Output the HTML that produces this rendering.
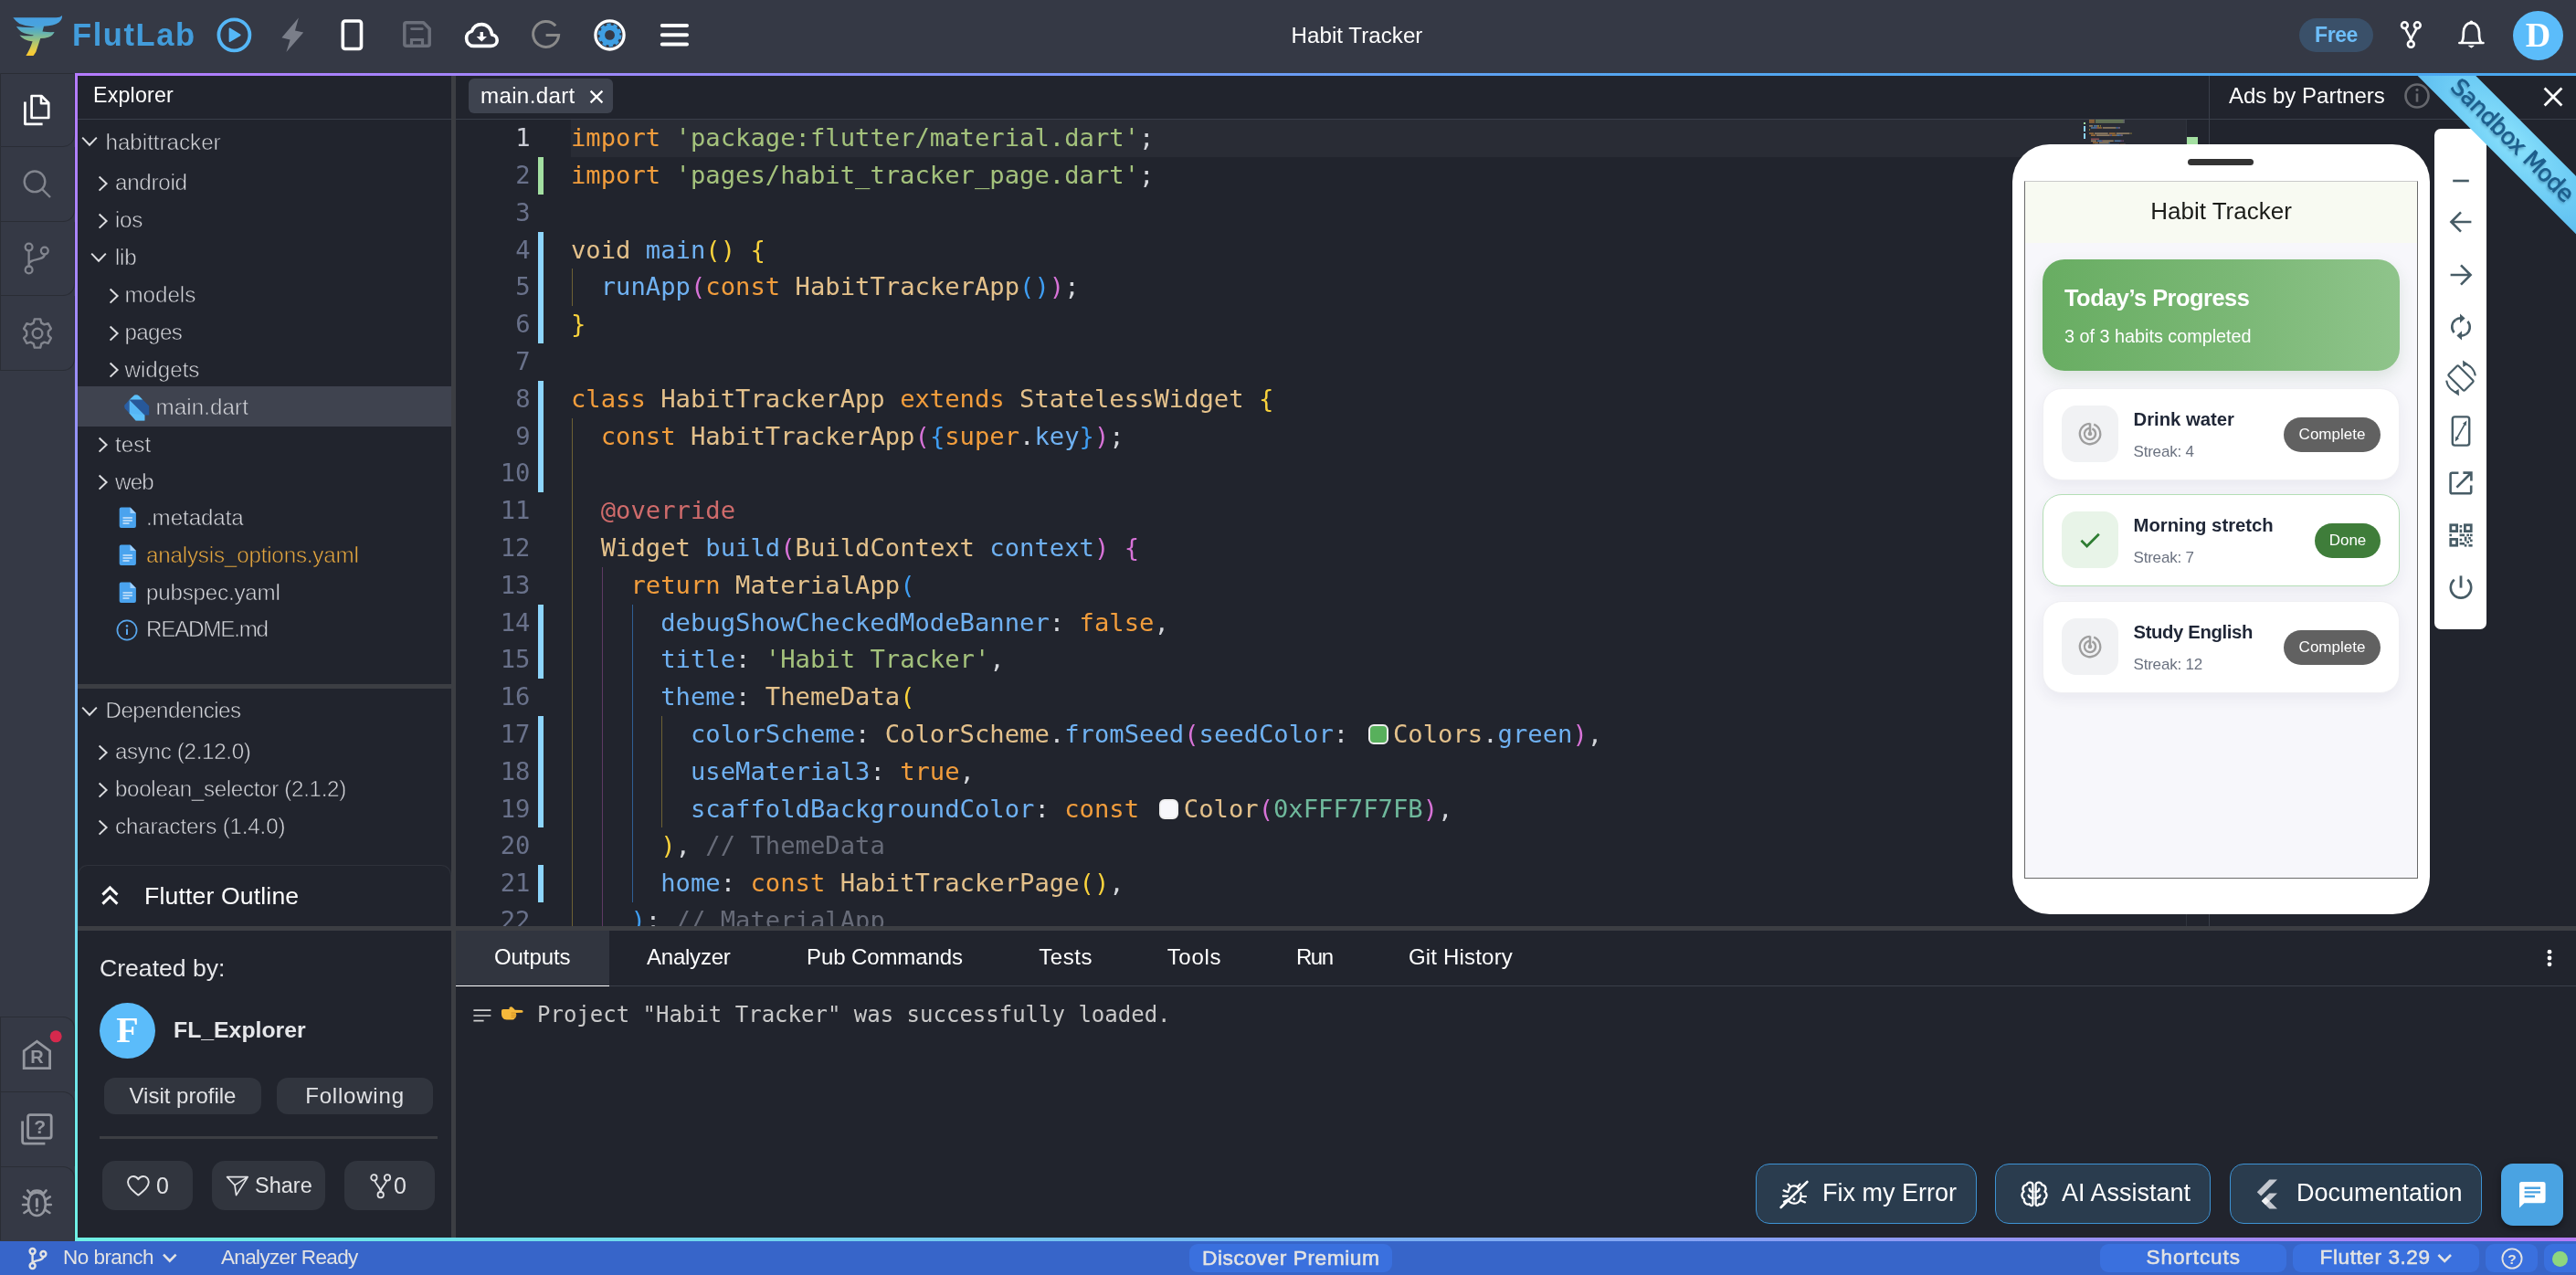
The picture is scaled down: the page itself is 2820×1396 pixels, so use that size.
<!DOCTYPE html>
<html lang="en">
<head>
<meta charset="utf-8">
<title>FlutLab - Habit Tracker</title>
<style>

*{box-sizing:border-box;margin:0;padding:0}
html,body{width:2820px;height:1396px;overflow:hidden;background:#21242d}
body{font-family:"Liberation Sans",sans-serif;color:#d4d6db;position:relative}
.abs{position:absolute}
body>*{will-change:transform}
svg{display:block;overflow:visible}
/* ---------- top bar ---------- */
#top{position:absolute;left:0;top:0;width:2820px;height:80px;background:#353945}
#brand{position:absolute;left:79px;top:14px;font-family:"Liberation Sans",sans-serif;font-weight:bold;font-size:34.5px;line-height:48px;color:#429cdb;letter-spacing:1.6px}
#title{position:absolute;left:0;width:2820px;top:22px;text-align:center;font-size:24.2px;line-height:34px;color:#fff;padding-left:151px}
.tico{position:absolute;top:0}
#free{position:absolute;left:2517px;top:20px;width:81px;height:37px;border-radius:19px;background:#3a5069;color:#6dbdf9;font-weight:bold;font-size:23px;line-height:36px;text-align:center;letter-spacing:-0.4px}
#avatar{position:absolute;left:2751px;top:12px;width:55px;height:54px;border-radius:50%;background:#5bbcfa;color:#fff;font-family:"Liberation Serif",serif;font-weight:bold;font-size:38px;line-height:53px;text-align:center}
/* ---------- activity bar ---------- */
#act{position:absolute;left:0;top:80px;width:82px;height:1279px;background:#353945}
.ab{position:absolute;left:0;width:82px;height:82px;border:1.5px solid #2a2d35;border-left-width:1px;border-top:none;border-bottom-right-radius:13px;background:#353945}
.ab2{position:absolute;left:0;width:82px;height:82px;border:1.5px solid #2a2d35;border-left-width:1px;border-bottom:none;border-top-right-radius:13px;background:#353945}
/* ---------- gradient frame ---------- */
#frame{position:absolute;left:82px;top:80px;width:2738px;height:1279px;background:
 linear-gradient(90deg,#b57bff 0%,#9c89fa 22%,#7596f6 42%,#55a6f0 62%,#4aa7ef 100%) top/100% 3px no-repeat,
 linear-gradient(180deg,#b57bff 0%,#a885fb 15%,#9591f7 30%,#84a7f5 45%,#76c4f1 60%,#6fdcec 75%,#6ff0e4 100%) left/3px 100% no-repeat,
 linear-gradient(90deg,#6ff0e4 0%,#6fd8ee 25%,#78b4f2 50%,#8a9df5 70%,#b57bf7 100%) bottom/100% 4px no-repeat,
 #21242d}
/* ---------- status bar ---------- */
#status{position:absolute;left:0;top:1359px;width:2820px;height:37px;background:#3765c9;color:#e3e3e3;font-size:22.5px;line-height:36px;overflow:hidden}
.chip{position:absolute;top:3px;height:31px;border-radius:9px;background:#3a70de}


/* ---------- explorer ---------- */
#exp{position:absolute;left:85px;top:83px;width:409px;height:1272px;overflow:hidden}
.vsplit{position:absolute;left:494px;top:83px;width:5px;height:1272px;background:#3c3e43}
.hd{position:absolute;font-size:23.2px;color:#fff;white-space:nowrap}
.hline{position:absolute;height:1px;background:#3a3f4a}
.tr{position:absolute;left:0;width:409px;height:41px;line-height:41px;font-size:24.2px;color:#d3d4d9;white-space:nowrap;-webkit-text-stroke:0.55px #21242d}
.tr span{position:absolute;top:0}
.tr svg{position:absolute}
.sel{position:absolute;left:0;width:409px;background:#3f434f}
.pill{position:absolute;background:#31353e;border-radius:12px;color:#e1e2e5;text-align:center;white-space:nowrap}


/* ---------- editor ---------- */
#ed{position:absolute;left:499px;top:83px;width:1919px;height:931px;overflow:hidden;background:#21242d}
#tab{position:absolute;left:14px;top:3px;width:158px;height:38px;border-radius:6px;background:#3e434f;color:#fff;font-size:24.2px;line-height:37px;padding-left:13px;letter-spacing:0.3px}
#code{position:absolute;left:0;top:48.2px;width:1919px;font-family:"DejaVu Sans Mono","Liberation Mono",monospace;font-size:27.2px;color:#d4d6db}
.ln{position:relative;height:40.8px;line-height:40.8px;white-space:pre}
.ln i{position:absolute;left:0;width:81.5px;text-align:right;font-style:normal;color:#69718a}
.ln b{position:absolute;left:126px;font-weight:normal}
.ln.act i{color:#c9cbd4}
.k{color:#f29d3c}.s{color:#a4c27c}.t{color:#e4c18b}.f{color:#6fb1f2}.y{color:#f9d23c}.p{color:#d873d8}.bl{color:#3f9ef3}.a{color:#cf6b6b}.n{color:#6fb99c}.c{color:#676b78}
.cb{display:inline-block;width:21.6px;height:21.6px;margin:2.7px 5.4px 0 5.4px;border:2.5px solid #eee;border-radius:6px;vertical-align:-2px;box-sizing:border-box}
.dd{position:absolute;left:90px;width:6px}
.ig{position:absolute;width:1px}


/* ---------- ads header / preview ---------- */
#ads{position:absolute;left:2418px;top:83px;width:402px;height:931px;border-left:1px solid #3a3f4a}
#phone{position:absolute;left:2203px;top:158px;width:457px;height:843px;border-radius:41px;background:#fff}
#scr{position:absolute;left:13px;top:39.5px;width:431px;height:764px;background:#f7f7fb;overflow:hidden;border:1px solid #6a6a6a;border-top-color:#c9c9c9}
#appbar{position:absolute;left:0;top:0;width:431px;height:67px;background:#f8faf2;color:#1b1c18;font-size:26px;line-height:64px;text-align:center;padding-right:2px}
.card{position:absolute;left:19px;width:391px;height:101px;border-radius:21px;background:#fff;border:1.5px solid #f0f0f3;box-shadow:0 6px 16px rgba(40,40,80,0.07)}
.ibox{position:absolute;left:19.5px;top:18px;width:62px;height:62px;border-radius:16px;background:#f1f2f4}
.ct{position:absolute;left:98.5px;font-weight:bold;font-size:20.3px;line-height:28px;color:#1f2636;white-space:nowrap}
.cs{position:absolute;left:98.5px;font-size:17px;line-height:24px;color:#6b7280;white-space:nowrap;letter-spacing:-0.2px}
.btn{position:absolute;height:38px;border-radius:19px;color:#fff;font-size:17px;line-height:37px;text-align:center}
#tb{position:absolute;left:2665px;top:141px;width:57px;height:548px;border-radius:7px;background:#fff}
#ribbon{position:absolute;left:2560px;top:83px;width:260px;height:260px;overflow:hidden}
#ribbon div{position:absolute;left:-10.8px;top:48.4px;width:400px;height:45px;transform:rotate(45deg);transform-origin:50% 50%;background:radial-gradient(ellipse 45% 160% at 50% 50%,#8ae2fc 0%,#6dccf5 50%,#4fb0ea 100%);color:#1d5e8c;font-family:"DejaVu Sans","Liberation Sans",sans-serif;font-size:25px;line-height:43px;text-align:center;text-shadow:1px 2px 3px rgba(20,60,100,0.45);letter-spacing:-0.5px;padding-left:2px;-webkit-text-stroke:0.7px #1d5e8c}


/* ---------- bottom panel ---------- */
#hsplit{position:absolute;left:499px;top:1014px;width:2321px;height:5px;background:#3c3e43}
#bp{position:absolute;left:499px;top:1019px;width:2321px;height:336px;background:#21242d}
.bt{position:absolute;top:1px;height:60px;line-height:56px;font-size:24px;color:#fff;white-space:nowrap}
#otab{position:absolute;left:0;top:0;width:168px;height:60.5px;background:#31353f;border-bottom:1.5px solid #fff}
#outl{position:absolute;left:89px;top:74px;font-family:"DejaVu Sans Mono","Liberation Mono",monospace;font-size:24px;line-height:36px;color:#c9c9c9;white-space:pre}
.ab3{position:absolute;top:255px;height:66px;border:1.5px solid #3d92d3;border-radius:15px;background:#2a3c4e;color:#fff;font-size:27px;line-height:63.5px;white-space:nowrap}
.ab3 span{position:absolute;top:0}

</style>
</head>
<body>
<div id="top">
  <svg class="abs" style="left:12px;top:12px" width="58" height="52" viewBox="0 0 58 52">
    <defs><linearGradient id="lg1" gradientUnits="userSpaceOnUse" x1="0" y1="5" x2="0" y2="49"><stop offset="0" stop-color="#479fe2"/><stop offset="0.24" stop-color="#49a3de"/><stop offset="0.42" stop-color="#62b2b4"/><stop offset="0.58" stop-color="#8fbf8a"/><stop offset="0.74" stop-color="#c3ca62"/><stop offset="0.9" stop-color="#f1cd3e"/><stop offset="1" stop-color="#f9c72f"/></linearGradient></defs>
    <path fill="url(#lg1)" d="M2.3 7.2 H49.6 Q54 7 56 4.9 Q56.4 9 52.5 12.6 Q47 16.4 36 16.7 L34.5 22.6 Q42 23.4 47.6 23 Q46 27 41 28.8 Q37 30 32.3 30 L27.3 45.1 L24.6 48.9 H16.4 Q20.5 43 23.7 33.1 L25.5 17.6 Q17 17 9.4 13.9 Q5 11 2.3 7.2 Z"/>
    <path fill="url(#lg1)" d="M5.9 17 Q15 18.5 27 17.9 L26 26.6 Q17 26 11.2 22.8 Q8 20.5 5.9 17 Z"/>
    <path fill="url(#lg1)" d="M9.4 26.4 Q16 27.7 26 27 L24.5 33.4 Q18 32.6 14.8 30.9 Q11.5 29 9.4 26.4 Z"/>
  </svg>
  <div id="brand">FlutLab</div>
  <!-- run -->
  <svg class="abs" style="left:236px;top:18px" width="41" height="41" viewBox="0 0 41 41"><circle cx="20.4" cy="20.3" r="17" fill="none" stroke="#55b7f7" stroke-width="3.8"/><path d="M15.6 13.6 L26.6 20.3 L15.6 27 Z" fill="#55b7f7" stroke="#55b7f7" stroke-width="2" stroke-linejoin="round"/></svg>
  <!-- bolt -->
  <svg class="abs" style="left:300px;top:10px" width="40" height="60" viewBox="300 10 40 60"><path d="M326.9 19.6 L308.4 41.3 L317.6 43.4 L313.4 57 L332.2 35.4 L323 33.4 Z" fill="#7a7e89"/></svg>
  <!-- phone -->
  <svg class="abs" style="left:365px;top:10px" width="40" height="60" viewBox="365 10 40 60"><rect x="375.3" y="23" width="20.2" height="30.5" rx="2.5" fill="none" stroke="#fff" stroke-width="3.6"/></svg>
  <!-- save -->
  <svg class="abs" style="left:436px;top:10px" width="40" height="60" viewBox="436 10 40 60"><path d="M444.8 24.8 H463.6 L470.2 31.4 V48.2 Q470.2 50.2 468.2 50.2 H444.8 Q442.8 50.2 442.8 48.2 V26.8 Q442.8 24.8 444.8 24.8 Z" fill="none" stroke="#6b6f7a" stroke-width="3.5" stroke-linejoin="round"/><path d="M450.5 50 V43.5 H462.5 V50" fill="none" stroke="#6b6f7a" stroke-width="3.2"/><path d="M450.5 31.6 H462.3" stroke="#6b6f7a" stroke-width="2.6" stroke-linecap="round"/></svg>
  <!-- cloud download -->
  <svg class="abs" style="left:500px;top:10px" width="56" height="60" viewBox="500 10 56 60"><path d="M518.5 50.4 H537.5 C541.6 50.4 544.2 47.6 544.2 44.2 C544.2 40.8 541.8 38.4 538.6 38 C538 31.6 533.6 26.6 527.2 26.6 C522.2 26.6 518.2 29.6 516.6 34.2 C512.8 34.8 510.6 38.2 510.6 42 C510.6 46.6 514 50.4 518.5 50.4 Z" fill="none" stroke="#fff" stroke-width="3.6" stroke-linejoin="round"/><path d="M525.6 35 H529 V40 H533 L527.3 45.6 L521.6 40 H525.6 Z" fill="#fff"/></svg>
  <!-- G -->
  <svg class="abs" style="left:575px;top:10px" width="46" height="60" viewBox="575 10 46 60"><path d="M608.2 28.2 A14 14 0 1 0 611.6 38.6 H597.6" fill="none" stroke="#8a8a8a" stroke-width="3"/></svg>
  <!-- gear -->
  <svg class="abs" style="left:645px;top:15px" width="46" height="48" viewBox="645 15 46 48"><circle cx="667.5" cy="38.4" r="15.6" fill="none" stroke="#fff" stroke-width="3.3"/><circle cx="667.5" cy="38.4" r="11" fill="#3f9fe3" stroke="#3f9fe3" stroke-width="4" stroke-dasharray="4.2 2.72"/><circle cx="667.5" cy="38.4" r="5.4" fill="#353945"/></svg>
  <!-- menu -->
  <svg class="abs" style="left:715px;top:15px" width="46" height="48" viewBox="715 15 46 48"><path d="M724.8 28.1 H752 M724.8 38.2 H752 M724.8 48.4 H752" stroke="#fff" stroke-width="4" stroke-linecap="round"/></svg>
  <div id="title">Habit Tracker</div>
  <div id="free">Free</div>
  <!-- fork -->
  <svg class="abs" style="left:2620px;top:15px" width="40" height="48" viewBox="2620 15 40 48"><g fill="none" stroke="#fff" stroke-width="2.6"><circle cx="2632.4" cy="27.7" r="3.4"/><circle cx="2646.3" cy="27.7" r="3.4"/><circle cx="2639.3" cy="48.4" r="3.4"/><path d="M2633.4 31 C2634.6 36 2639.3 39.5 2639.3 45 M2645.3 31 C2644.1 36 2639.3 39.5 2639.3 45"/></g></svg>
  <!-- bell -->
  <svg class="abs" style="left:2685px;top:15px" width="40" height="48" viewBox="2685 15 40 48"><path d="M2694.6 46.8 C2697 44 2696.8 40 2696.8 35.6 C2696.8 29.4 2700.4 25.2 2705.4 25.2 C2710.4 25.2 2714 29.4 2714 35.6 C2714 40 2713.8 44 2716.2 46.8" fill="none" stroke="#fff" stroke-width="2.7"/><path d="M2692.4 47 H2718.4" stroke="#fff" stroke-width="2.7" stroke-linecap="round"/><circle cx="2705.4" cy="24.6" r="2" fill="#fff"/><path d="M2702.6 50.2 H2708.2 L2705.4 52 Z" fill="#fff" stroke="#fff" stroke-width="1" stroke-linejoin="round"/></svg>
  <div id="avatar">D</div>
</div>
<div id="act">
  <div class="ab" style="top:0;height:81px;border-top:1.5px solid #2a2d35"></div>
  <div class="ab" style="top:81px;height:82px"></div>
  <div class="ab" style="top:163px;height:81px"></div>
  <div class="ab" style="top:244px;height:82px"></div>
  <div class="ab2" style="top:1033px;height:82px"></div>
  <div class="ab2" style="top:1115px;height:82px"></div>
  <div class="ab2" style="top:1197px;height:81px"></div>
  <!-- files -->
  <svg class="abs" style="left:18px;top:18px" width="44" height="44" viewBox="18 98 44 44"><g fill="none" stroke="#fff" stroke-width="2.7" stroke-linejoin="round"><path d="M34.6 105 H45.4 L53.2 112.8 V129 H34.6 Z"/><path d="M45 105 V113.2 H53.2" stroke-width="2.6"/><path d="M27.4 111.6 V135.8 H46.6"/></g></svg>
  <!-- search -->
  <svg class="abs" style="left:18px;top:100px" width="44" height="44" viewBox="18 180 44 44"><g fill="none" stroke="#82858e" stroke-width="2.4"><circle cx="38" cy="198.8" r="11.3"/><path d="M46 207 L55 216"/></g></svg>
  <!-- scm -->
  <svg class="abs" style="left:18px;top:180px" width="44" height="46" viewBox="18 260 44 46"><g fill="none" stroke="#82858e" stroke-width="2.3"><circle cx="31.6" cy="270.6" r="3.9"/><circle cx="48.8" cy="274.6" r="3.9"/><circle cx="31.6" cy="295.4" r="3.9"/><path d="M31.6 274.6 V291.4 M48.8 278.6 C48.8 286 31.6 282 31.6 289.6"/></g></svg>
  <!-- settings gear -->
  <svg class="abs" style="left:18px;top:262px" width="46" height="46" viewBox="-23 -23 46 46"><g fill="none" stroke="#82858e" stroke-width="2.4" stroke-linejoin="round"><path id="gearp" d="M-3.2 -15.6 H3.2 L4.3 -11.4 L7.5 -9.6 L11.7 -10.8 L14.9 -5.2 L11.8 -2.1 V2.1 L14.9 5.2 L11.7 10.8 L7.5 9.6 L4.3 11.4 L3.2 15.6 H-3.2 L-4.3 11.4 L-7.5 9.6 L-11.7 10.8 L-14.9 5.2 L-11.8 2.1 V-2.1 L-14.9 -5.2 L-11.7 -10.8 L-7.5 -9.6 L-4.3 -11.4 Z"/><circle cx="0" cy="0" r="5.3"/></g></svg>
  <!-- R house -->
  <svg class="abs" style="left:18px;top:1050px" width="50" height="50" viewBox="18 1130 50 50"><path d="M26.2 1169.6 V1150.6 L40.4 1140.2 L54.6 1150.6 V1169.6 Z" fill="none" stroke="#94979f" stroke-width="2.8" stroke-linejoin="miter"/><text x="40.6" y="1164.4" text-anchor="middle" font-family="Liberation Sans, sans-serif" font-weight="bold" font-size="20" fill="#94979f">R</text><circle cx="61.2" cy="1134.8" r="6.5" fill="#d5294d"/></svg>
  <!-- help pages -->
  <svg class="abs" style="left:18px;top:1130px" width="50" height="50" viewBox="18 1210 50 50"><g fill="none" stroke="#94979f" stroke-width="2.8" stroke-linejoin="round"><rect x="30.6" y="1220.6" width="25.6" height="25.6" rx="2.5"/><path d="M24.6 1227.4 V1249.6 Q24.6 1252.2 27.2 1252.2 H49.4"/></g><text x="43.6" y="1241.4" text-anchor="middle" font-family="Liberation Sans, sans-serif" font-weight="bold" font-size="21" fill="#94979f">?</text></svg>
  <!-- bug -->
  <svg class="abs" style="left:18px;top:1214px" width="50" height="50" viewBox="18 1294 50 50"><g fill="none" stroke="#94979f" stroke-width="2.6" stroke-linecap="round"><path d="M31 1318.6 C31 1309.8 35 1305.8 40.4 1305.8 C45.8 1305.8 49.8 1309.8 49.8 1318.6 C49.8 1326.6 45.8 1331 40.4 1331 C35 1331 31 1326.6 31 1318.6 Z"/><path d="M33.8 1307.6 L30.2 1303.4 M47 1307.6 L50.6 1303.4 M34.6 1306 C36 1302.6 44.8 1302.6 46.2 1306"/><path d="M30.8 1313.4 L26 1310.4 M30.6 1319 H25 M31.4 1324.6 L26.4 1328 M50 1313.4 L54.8 1310.4 M50.2 1319 H55.8 M49.4 1324.6 L54.4 1328"/><path d="M40.4 1313 V1320.4" stroke-width="3"/></g><circle cx="40.4" cy="1325" r="1.7" fill="#94979f"/></svg>
</div>

<div id="frame"></div>

<div id="exp">
<div class="hd" style="left:17px;top:4px;line-height:34px;letter-spacing:0.2px">Explorer</div>
<div class="hline" style="left:0;top:47px;width:409px"></div>
<div class="sel" style="top:340px;height:43.5px"></div>
<div class="tr" style="top:50.0px"><svg style="left:3.4px;top:16.3px" width="20" height="12" viewBox="0 0 20 12"><path d="M2.2 1.6 L10 9.8 L17.8 1.6" fill="none" stroke="#dcdde0" stroke-width="2"/></svg><span style="left:30.5px;top:2px;letter-spacing:-0.02px">habittracker</span></div>
<div class="tr" style="top:94.1px"><svg style="left:22px;top:13.5px" width="12" height="20" viewBox="0 0 12 20"><path d="M1.6 2.4 L9.6 10 L1.6 17.6" fill="none" stroke="#dcdde0" stroke-width="2"/></svg><span style="left:41px;top:2px;letter-spacing:-0.27px">android</span></div>
<div class="tr" style="top:135.3px"><svg style="left:22px;top:13.5px" width="12" height="20" viewBox="0 0 12 20"><path d="M1.6 2.4 L9.6 10 L1.6 17.6" fill="none" stroke="#dcdde0" stroke-width="2"/></svg><span style="left:41px;top:2px;letter-spacing:-0.32px">ios</span></div>
<div class="tr" style="top:176.3px"><svg style="left:13.4px;top:16.3px" width="20" height="12" viewBox="0 0 20 12"><path d="M2.2 1.6 L10 9.8 L17.8 1.6" fill="none" stroke="#dcdde0" stroke-width="2"/></svg><span style="left:41px;top:2px;letter-spacing:-0.26px">lib</span></div>
<div class="tr" style="top:217.3px"><svg style="left:34px;top:13.5px" width="12" height="20" viewBox="0 0 12 20"><path d="M1.6 2.4 L9.6 10 L1.6 17.6" fill="none" stroke="#dcdde0" stroke-width="2"/></svg><span style="left:51.5px;top:2px;letter-spacing:-0.04px">models</span></div>
<div class="tr" style="top:258.1px"><svg style="left:34px;top:13.5px" width="12" height="20" viewBox="0 0 12 20"><path d="M1.6 2.4 L9.6 10 L1.6 17.6" fill="none" stroke="#dcdde0" stroke-width="2"/></svg><span style="left:51.5px;top:2px;letter-spacing:-0.66px">pages</span></div>
<div class="tr" style="top:298.9px"><svg style="left:34px;top:13.5px" width="12" height="20" viewBox="0 0 12 20"><path d="M1.6 2.4 L9.6 10 L1.6 17.6" fill="none" stroke="#dcdde0" stroke-width="2"/></svg><span style="left:51.5px;top:2px;letter-spacing:-0.01px">widgets</span></div>
<div class="tr" style="top:339.7px"><svg style="left:51px;top:9.0px" width="28" height="29" viewBox="0 0 28 29"><path d="M5.6 5.8 L0.4 11.6 Q-0.4 13.4 0.8 15.2 L5.6 20.6 Z" fill="#2a5fa5"/><path d="M5.6 5.8 L11.2 0.6 Q14 -0.4 16.2 1.4 L20.4 5.8 Z" fill="#5cc0fa"/><path d="M5.6 5.8 H20.4 L27.2 12.4 V22.4 H22.4 Z" fill="#27589a"/><path d="M5.6 5.8 L22.4 22.4 V28.4 H12.6 L5.6 20.6 Z" fill="#56b7f6"/><path d="M5.6 20.6 L12.6 28.4 H22.4 V22.4 Z" fill="#63c6fb" opacity="0.55"/></svg><span style="left:85.5px;top:2px;letter-spacing:0.08px;-webkit-text-stroke-color:#3f434f">main.dart</span></div>
<div class="tr" style="top:380.8px"><svg style="left:22px;top:13.5px" width="12" height="20" viewBox="0 0 12 20"><path d="M1.6 2.4 L9.6 10 L1.6 17.6" fill="none" stroke="#dcdde0" stroke-width="2"/></svg><span style="left:41px;top:2px;letter-spacing:0.06px">test</span></div>
<div class="tr" style="top:421.7px"><svg style="left:22px;top:13.5px" width="12" height="20" viewBox="0 0 12 20"><path d="M1.6 2.4 L9.6 10 L1.6 17.6" fill="none" stroke="#dcdde0" stroke-width="2"/></svg><span style="left:41px;top:2px;letter-spacing:-0.80px">web</span></div>
<div class="tr" style="top:460.9px"><svg style="left:45px;top:11.5px" width="20" height="24" viewBox="0 0 19 24"><path d="M2.2 0.6 H12 L18.4 7 V21 Q18.4 23 16.4 23 H2.2 Q0.2 23 0.2 21 V2.6 Q0.2 0.6 2.2 0.6 Z" fill="#4aa3ee"/><path d="M12 0.6 L18.4 7 H12 Z" fill="#9fd0fb"/><path d="M4 12 H14.4 M4 15 H14.4 M4 18 H11" stroke="#cfe6fb" stroke-width="1.4"/></svg><span style="left:75px;top:2px;letter-spacing:-0.10px">.metadata</span></div>
<div class="tr" style="top:501.7px"><svg style="left:45px;top:11.5px" width="20" height="24" viewBox="0 0 19 24"><path d="M2.2 0.6 H12 L18.4 7 V21 Q18.4 23 16.4 23 H2.2 Q0.2 23 0.2 21 V2.6 Q0.2 0.6 2.2 0.6 Z" fill="#4aa3ee"/><path d="M12 0.6 L18.4 7 H12 Z" fill="#9fd0fb"/><path d="M4 12 H14.4 M4 15 H14.4 M4 18 H11" stroke="#cfe6fb" stroke-width="1.4"/></svg><span style="left:75px;top:2px;letter-spacing:-0.19px;color:#e5a73f">analysis_options.yaml</span></div>
<div class="tr" style="top:542.5px"><svg style="left:45px;top:11.5px" width="20" height="24" viewBox="0 0 19 24"><path d="M2.2 0.6 H12 L18.4 7 V21 Q18.4 23 16.4 23 H2.2 Q0.2 23 0.2 21 V2.6 Q0.2 0.6 2.2 0.6 Z" fill="#4aa3ee"/><path d="M12 0.6 L18.4 7 H12 Z" fill="#9fd0fb"/><path d="M4 12 H14.4 M4 15 H14.4 M4 18 H11" stroke="#cfe6fb" stroke-width="1.4"/></svg><span style="left:75px;top:2px;letter-spacing:-0.22px">pubspec.yaml</span></div>
<div class="tr" style="top:583.4px"><svg style="left:42px;top:11.5px" width="24" height="24" viewBox="0 0 24 24"><circle cx="12" cy="12" r="10.6" fill="none" stroke="#58a6ec" stroke-width="1.7"/><path d="M12 10.4 V17" stroke="#58a6ec" stroke-width="2"/><circle cx="12" cy="7.4" r="1.3" fill="#58a6ec"/></svg><span style="left:75px;top:2px;letter-spacing:-1.22px">README.md</span></div>
<div class="tr" style="top:672.1px"><svg style="left:3.4px;top:17.8px" width="20" height="12" viewBox="0 0 20 12"><path d="M2.2 1.6 L10 9.8 L17.8 1.6" fill="none" stroke="#dcdde0" stroke-width="2"/></svg><span style="left:30.5px;top:2px;letter-spacing:-0.56px">Dependencies</span></div>
<div class="tr" style="top:717.1px"><svg style="left:22px;top:13.5px" width="12" height="20" viewBox="0 0 12 20"><path d="M1.6 2.4 L9.6 10 L1.6 17.6" fill="none" stroke="#dcdde0" stroke-width="2"/></svg><span style="left:41px;top:2px;letter-spacing:-0.34px">async (2.12.0)</span></div>
<div class="tr" style="top:758.1px"><svg style="left:22px;top:13.5px" width="12" height="20" viewBox="0 0 12 20"><path d="M1.6 2.4 L9.6 10 L1.6 17.6" fill="none" stroke="#dcdde0" stroke-width="2"/></svg><span style="left:41px;top:2px;letter-spacing:-0.33px">boolean_selector (2.1.2)</span></div>
<div class="tr" style="top:799.1px"><svg style="left:22px;top:13.5px" width="12" height="20" viewBox="0 0 12 20"><path d="M1.6 2.4 L9.6 10 L1.6 17.6" fill="none" stroke="#dcdde0" stroke-width="2"/></svg><span style="left:41px;top:2px;letter-spacing:-0.18px">characters (1.4.0)</span></div>
<div class="abs" style="left:0;top:666px;width:409px;height:5px;background:#3c3e43"></div>
<div class="abs" style="left:0;top:864px;width:409px;height:70px;border:1.5px solid #2f323b;border-bottom:none;border-radius:11px 11px 0 0;background:#21242d"></div>
<svg class="abs" style="left:24px;top:885px" width="24" height="26" viewBox="0 0 24 26"><path d="M3.4 11.6 L11.4 3.8 L19.4 11.6 M3.4 21.6 L11.4 13.8 L19.4 21.6" fill="none" stroke="#fff" stroke-width="3"/></svg>
<div class="hd" style="left:73px;top:878px;font-size:26.6px;line-height:40px;letter-spacing:0.15px">Flutter Outline</div>
<div class="abs" style="left:0;top:931px;width:409px;height:5px;background:#3c3e43"></div>
<div class="hd" style="left:24px;top:957px;font-size:26.6px;line-height:40px;color:#e6e7ea">Created by:</div>
<div class="abs" style="left:24px;top:1015px;width:61px;height:61px;border-radius:50%;background:#5bbcfa;color:#fff;font-family:'Liberation Serif',serif;font-weight:bold;font-size:40px;line-height:59px;text-align:center">F</div>
<div class="hd" style="left:105px;top:1025px;font-size:24.8px;line-height:40px;font-weight:bold;color:#e6e7ea">FL_Explorer</div>
<div class="pill" style="left:29px;top:1097px;width:172px;height:40px;font-size:24px;line-height:40px">Visit profile</div>
<div class="pill" style="left:218px;top:1097px;width:171px;height:40px;font-size:24px;line-height:39px;letter-spacing:0.8px">Following</div>
<div class="abs" style="left:24px;top:1161px;width:370px;height:3px;background:#3c3e43"></div>
<div class="pill" style="left:27px;top:1188px;width:99px;height:54px;border-radius:14px"></div>
<div class="pill" style="left:147px;top:1188px;width:124px;height:54px;border-radius:14px"></div>
<div class="pill" style="left:292px;top:1188px;width:99px;height:54px;border-radius:14px"></div>
<svg class="abs" style="left:53px;top:1203px" width="27" height="25" viewBox="0 0 27 25"><path d="M13.4 22.6 C7 17.4 2 13.4 2 8.2 C2 4.6 4.8 2 8 2 C10.2 2 12.2 3.2 13.4 5.2 C14.6 3.2 16.6 2 18.8 2 C22 2 24.8 4.6 24.8 8.2 C24.8 13.4 19.8 17.4 13.4 22.6 Z" fill="none" stroke="#e1e2e5" stroke-width="1.9" stroke-linejoin="round"/></svg>
<div class="hd" style="left:86px;top:1195px;font-size:25px;line-height:40px;color:#e1e2e5">0</div>
<svg class="abs" style="left:161px;top:1203px" width="28" height="26" viewBox="0 0 28 26"><path d="M2.6 2.6 H25.2 L12.6 22.6 L11 11.6 Z M11 11.6 L25.2 2.6" fill="none" stroke="#e1e2e5" stroke-width="1.7" stroke-linejoin="round"/></svg>
<div class="hd" style="left:194px;top:1195px;font-size:23.5px;line-height:40px;color:#e1e2e5">Share</div>
<svg class="abs" style="left:319px;top:1201px" width="26" height="30" viewBox="0 0 26 30"><g fill="none" stroke="#e1e2e5" stroke-width="1.8"><circle cx="5.4" cy="5.4" r="3.2"/><circle cx="20" cy="5.4" r="3.2"/><circle cx="12.7" cy="24.2" r="3.2"/><path d="M6.2 8.6 C7.4 13.6 12.7 15.6 12.7 21 M19.2 8.6 C18 13.6 12.7 15.6 12.7 21"/></g></svg>
<div class="hd" style="left:346px;top:1195px;font-size:25px;line-height:40px;color:#e1e2e5">0</div>
</div>
<div class="vsplit"></div>
<div id="ed">
<div id="tab">main.dart<svg class="abs" style="left:132px;top:12px" width="16" height="16" viewBox="0 0 16 16"><path d="M1.6 1.6 L14.4 14.4 M14.4 1.6 L1.6 14.4" stroke="#fff" stroke-width="2.2"/></svg></div>
<div class="hline" style="left:0;top:47px;width:1919px"></div>
<div class="abs" style="left:126px;top:48px;width:1768px;height:40.5px;background:#292c35"></div>
<div id="code">
<div class="ln act"><i>1</i><b><span class="k">import</span> <span class="s">'package:flutter/material.dart'</span>;</b></div>
<div class="ln"><i>2</i><b><span class="k">import</span> <span class="s">'pages/habit_tracker_page.dart'</span>;</b></div>
<div class="ln"><i>3</i><b></b></div>
<div class="ln"><i>4</i><b><span class="t">void</span> <span class="f">main</span><span class="y">()</span> <span class="y">{</span></b></div>
<div class="ln"><i>5</i><b>  <span class="f">runApp</span><span class="p">(</span><span class="k">const</span> <span class="t">HabitTrackerApp</span><span class="bl">()</span><span class="p">)</span>;</b></div>
<div class="ln"><i>6</i><b><span class="y">}</span></b></div>
<div class="ln"><i>7</i><b></b></div>
<div class="ln"><i>8</i><b><span class="k">class</span> <span class="t">HabitTrackerApp</span> <span class="k">extends</span> <span class="t">StatelessWidget</span> <span class="y">{</span></b></div>
<div class="ln"><i>9</i><b>  <span class="k">const</span> <span class="t">HabitTrackerApp</span><span class="p">(</span><span class="bl">{</span><span class="k">super</span>.<span class="f">key</span><span class="bl">}</span><span class="p">)</span>;</b></div>
<div class="ln"><i>10</i><b></b></div>
<div class="ln"><i>11</i><b>  <span class="a">@override</span></b></div>
<div class="ln"><i>12</i><b>  <span class="t">Widget</span> <span class="f">build</span><span class="p">(</span><span class="t">BuildContext</span> <span class="f">context</span><span class="p">)</span> <span class="p">{</span></b></div>
<div class="ln"><i>13</i><b>    <span class="k">return</span> <span class="t">MaterialApp</span><span class="bl">(</span></b></div>
<div class="ln"><i>14</i><b>      <span class="f">debugShowCheckedModeBanner</span>: <span class="k">false</span>,</b></div>
<div class="ln"><i>15</i><b>      <span class="f">title</span>: <span class="s">'Habit Tracker'</span>,</b></div>
<div class="ln"><i>16</i><b>      <span class="f">theme</span>: <span class="t">ThemeData</span><span class="y">(</span></b></div>
<div class="ln"><i>17</i><b>        <span class="f">colorScheme</span>: <span class="t">ColorScheme</span>.<span class="f">fromSeed</span><span class="p">(</span><span class="f">seedColor</span>: <span class="cb" style="background:#58b05c"></span><span class="t">Colors</span>.<span class="f">green</span><span class="p">)</span>,</b></div>
<div class="ln"><i>18</i><b>        <span class="f">useMaterial3</span>: <span class="k">true</span>,</b></div>
<div class="ln"><i>19</i><b>        <span class="f">scaffoldBackgroundColor</span>: <span class="k">const</span> <span class="cb" style="background:#f7f7fb"></span><span class="t">Color</span><span class="p">(</span><span class="n">0xFFF7F7FB</span><span class="p">)</span>,</b></div>
<div class="ln"><i>20</i><b>      <span class="y">)</span>, <span class="c">// ThemeData</span></b></div>
<div class="ln"><i>21</i><b>      <span class="f">home</span>: <span class="k">const</span> <span class="t">HabitTrackerPage</span><span class="y">()</span>,</b></div>
<div class="ln"><i>22</i><b>    <span class="bl">)</span>; <span class="c">// MaterialApp</span></b></div>
<div class="ln"><i>23</i><b>  <span class="p">}</span></b></div>
<div class="dd" style="top:40.8px;height:40.8px;background:#a3dfa1"></div>
<div class="dd" style="top:122.4px;height:122.4px;background:#8dd5fc"></div>
<div class="dd" style="top:285.6px;height:122.4px;background:#8dd5fc"></div>
<div class="dd" style="top:530.4px;height:81.6px;background:#8dd5fc"></div>
<div class="dd" style="top:652.8px;height:122.4px;background:#8dd5fc"></div>
<div class="dd" style="top:816.0px;height:40.8px;background:#8dd5fc"></div>
<div class="ig" style="left:127.0px;top:163.2px;height:40.8px;background:#6d6134"></div>
<div class="ig" style="left:127.0px;top:326.4px;height:612.0px;background:#6d6134"></div>
<div class="ig" style="left:159.7px;top:489.6px;height:408.0px;background:#5e3a63"></div>
<div class="ig" style="left:192.5px;top:530.4px;height:326.4px;background:#2f5f94"></div>
<div class="ig" style="left:225.2px;top:652.8px;height:122.4px;background:#6d6134"></div>
</div>
<div class="abs" style="left:1894px;top:48px;width:1px;height:883px;background:#30343d"></div>
<div class="abs" style="left:1895px;top:67px;width:12px;height:40px;background:#a3dfa1"></div>
<svg class="abs" style="left:1788px;top:48.4px;opacity:0.6" width="100" height="32" viewBox="0 0 100 32"><rect x="0.0" y="0.00" width="5.9" height="1.5" fill="#f29d3c"/><rect x="6.9" y="0.00" width="30.7" height="1.5" fill="#a4c27c"/><rect x="37.6" y="0.00" width="1.0" height="1.5" fill="#d4d6db"/><rect x="0.0" y="2.05" width="5.9" height="1.5" fill="#f29d3c"/><rect x="6.9" y="2.05" width="30.7" height="1.5" fill="#a4c27c"/><rect x="37.6" y="2.05" width="1.0" height="1.5" fill="#d4d6db"/><rect x="0.0" y="6.15" width="4.0" height="1.5" fill="#e4c18b"/><rect x="5.0" y="6.15" width="4.0" height="1.5" fill="#6fb1f2"/><rect x="8.9" y="6.15" width="2.0" height="1.5" fill="#f9d23c"/><rect x="11.9" y="6.15" width="1.0" height="1.5" fill="#f9d23c"/><rect x="2.0" y="8.20" width="5.9" height="1.5" fill="#6fb1f2"/><rect x="7.9" y="8.20" width="1.0" height="1.5" fill="#d873d8"/><rect x="8.9" y="8.20" width="5.0" height="1.5" fill="#f29d3c"/><rect x="14.8" y="8.20" width="14.8" height="1.5" fill="#e4c18b"/><rect x="29.7" y="8.20" width="2.0" height="1.5" fill="#3f9ef3"/><rect x="31.7" y="8.20" width="1.0" height="1.5" fill="#d873d8"/><rect x="32.7" y="8.20" width="1.0" height="1.5" fill="#d4d6db"/><rect x="0.0" y="10.25" width="1.0" height="1.5" fill="#f9d23c"/><rect x="0.0" y="14.35" width="5.0" height="1.5" fill="#f29d3c"/><rect x="5.9" y="14.35" width="14.8" height="1.5" fill="#e4c18b"/><rect x="21.8" y="14.35" width="6.9" height="1.5" fill="#f29d3c"/><rect x="29.7" y="14.35" width="14.8" height="1.5" fill="#e4c18b"/><rect x="45.5" y="14.35" width="1.0" height="1.5" fill="#f9d23c"/><rect x="2.0" y="16.40" width="5.0" height="1.5" fill="#f29d3c"/><rect x="7.9" y="16.40" width="14.8" height="1.5" fill="#e4c18b"/><rect x="22.8" y="16.40" width="1.0" height="1.5" fill="#d873d8"/><rect x="23.8" y="16.40" width="1.0" height="1.5" fill="#3f9ef3"/><rect x="24.8" y="16.40" width="5.0" height="1.5" fill="#f29d3c"/><rect x="29.7" y="16.40" width="1.0" height="1.5" fill="#d4d6db"/><rect x="30.7" y="16.40" width="3.0" height="1.5" fill="#6fb1f2"/><rect x="33.7" y="16.40" width="1.0" height="1.5" fill="#3f9ef3"/><rect x="34.6" y="16.40" width="1.0" height="1.5" fill="#d873d8"/><rect x="35.6" y="16.40" width="1.0" height="1.5" fill="#d4d6db"/><rect x="2.0" y="20.50" width="8.9" height="1.5" fill="#cf6b6b"/><rect x="2.0" y="22.55" width="5.9" height="1.5" fill="#e4c18b"/><rect x="8.9" y="22.55" width="5.0" height="1.5" fill="#6fb1f2"/><rect x="13.9" y="22.55" width="1.0" height="1.5" fill="#d873d8"/><rect x="14.8" y="22.55" width="11.9" height="1.5" fill="#e4c18b"/><rect x="27.7" y="22.55" width="6.9" height="1.5" fill="#6fb1f2"/><rect x="34.6" y="22.55" width="1.0" height="1.5" fill="#d873d8"/><rect x="36.6" y="22.55" width="1.0" height="1.5" fill="#d873d8"/><rect x="4.0" y="24.60" width="5.9" height="1.5" fill="#f29d3c"/><rect x="10.9" y="24.60" width="10.9" height="1.5" fill="#e4c18b"/><rect x="21.8" y="24.60" width="1.0" height="1.5" fill="#3f9ef3"/><rect x="5.9" y="26.65" width="25.7" height="1.5" fill="#6fb1f2"/><rect x="31.7" y="26.65" width="1.0" height="1.5" fill="#d4d6db"/><rect x="33.7" y="26.65" width="5.0" height="1.5" fill="#f29d3c"/><rect x="38.6" y="26.65" width="1.0" height="1.5" fill="#d4d6db"/></svg>
<div class="abs" style="left:1781.5px;top:50.5px;width:2.5px;height:2px;background:#a3dfa1"></div>
<div class="abs" style="left:1781.5px;top:54.5px;width:2.5px;height:6.1px;background:#8dd5fc"></div>
<div class="abs" style="left:1781.5px;top:62.8px;width:2.5px;height:6.1px;background:#8dd5fc"></div>
<div class="abs" style="left:1781.5px;top:75.0px;width:2.5px;height:2.0px;background:#8dd5fc"></div>
</div>
<div id="ads"><div class="hd" style="left:21px;top:5px;font-size:24px;line-height:34px">Ads by Partners</div><svg class="abs" style="left:212px;top:6.5px" width="30" height="30" viewBox="-15 -15 30 30"><circle r="12.5" fill="none" stroke="#65676d" stroke-width="2.7"/><path d="M0 -2.6 V6.6" stroke="#65676d" stroke-width="2.6"/><circle cy="-6.6" r="1.6" fill="#65676d"/></svg><svg class="abs" style="left:365px;top:12px" width="22" height="22" viewBox="-11 -11 22 22"><path d="M-9.4 -9.4 L9.4 9.4 M9.4 -9.4 L-9.4 9.4" stroke="#fff" stroke-width="2.8"/></svg><div class="hline" style="left:0;top:47px;width:402px"></div></div>
<div id="phone"><div class="abs" style="left:192px;top:15.5px;width:72px;height:7px;border-radius:4px;background:#333"></div><div id="scr"><div id="appbar">Habit Tracker</div><div class="abs" style="left:19px;top:85px;width:391px;height:122px;border-radius:24px;background:linear-gradient(90deg,#68ad62 0%,#7bb876 55%,#8fc48b 100%);box-shadow:0 8px 18px rgba(40,90,40,0.13)"><div class="abs" style="left:24px;top:24.5px;font-weight:bold;font-size:25.4px;line-height:36px;color:#fff;letter-spacing:-0.5px;white-space:nowrap">Today’s Progress</div><div class="abs" style="left:24px;top:70px;font-size:19.8px;line-height:28px;color:#fff;white-space:nowrap">3 of 3 habits completed</div></div><div class="card" style="top:226.6px;"><div class="ibox" style=""><svg class="abs" style="left:17px;top:17px" width="28" height="28" viewBox="-14 -14 28 28"><g fill="none" stroke="#9e9e9e" stroke-width="2.3"><path d="M4.2 -10.4 A11.2 11.2 0 1 1 -0.2 -11.2"/><path d="M2.4 -5.6 A6.1 6.1 0 1 1 -0.2 -6.1"/><path d="M0 0 V-11.6" stroke-width="2.5"/></g><circle cx="0" cy="0" r="2.3" fill="#9e9e9e"/></svg></div><div class="ct" style="top:19px;letter-spacing:0px">Drink water</div><div class="cs" style="top:56.5px">Streak: 4</div><div class="btn" style="left:263px;top:30.5px;width:106px;background:#616161">Complete</div></div><div class="card" style="top:342.9px;border-color:#b4deb6;"><div class="ibox" style="background:#e8f4e8"><svg class="abs" style="left:17px;top:17px" width="28" height="28" viewBox="0 0 28 28"><path d="M4.4 14.8 L10.6 21 L23.8 7.8" fill="none" stroke="#2e7d32" stroke-width="2.7"/></svg></div><div class="ct" style="top:19px;letter-spacing:0px">Morning stretch</div><div class="cs" style="top:56.5px">Streak: 7</div><div class="btn" style="left:297px;top:31px;width:72px;background:#3f7d3a">Done</div></div><div class="card" style="top:459.6px;"><div class="ibox" style=""><svg class="abs" style="left:17px;top:17px" width="28" height="28" viewBox="-14 -14 28 28"><g fill="none" stroke="#9e9e9e" stroke-width="2.3"><path d="M4.2 -10.4 A11.2 11.2 0 1 1 -0.2 -11.2"/><path d="M2.4 -5.6 A6.1 6.1 0 1 1 -0.2 -6.1"/><path d="M0 0 V-11.6" stroke-width="2.5"/></g><circle cx="0" cy="0" r="2.3" fill="#9e9e9e"/></svg></div><div class="ct" style="top:19px;letter-spacing:-0.37px">Study English</div><div class="cs" style="top:56.5px">Streak: 12</div><div class="btn" style="left:263px;top:30.5px;width:106px;background:#616161">Complete</div></div></div></div>
<div id="tb"><svg class="abs" style="left:13.5px;top:41.80000000000001px" width="30" height="30" viewBox="-15.0 -15.0 30 30"><g fill="none" stroke="#475c66" stroke-width="2.6"><path d="M-8.8 0 H8.8"/></g></svg><svg class="abs" style="left:13.5px;top:87.4px" width="30" height="30" viewBox="-15.0 -15.0 30 30"><g fill="none" stroke="#475c66" stroke-width="2.6"><path d="M11.4 0 H-10 M0 -10.6 L-10.6 0 L0 10.6"/></g></svg><svg class="abs" style="left:13.5px;top:144.5px" width="30" height="30" viewBox="-15.0 -15.0 30 30"><g fill="none" stroke="#475c66" stroke-width="2.6"><path d="M-11.4 0 H10 M0 -10.6 L10.6 0 L0 10.6"/></g></svg><svg class="abs" style="left:11.5px;top:199.60000000000002px" width="34" height="34" viewBox="-17.0 -17.0 34 34"><g fill="none" stroke="#475c66" stroke-width="2.6"><path d="M7.4 -6.2 A9.6 9.6 0 0 1 5.6 8 M-7.4 6.2 A9.6 9.6 0 0 1 -5.6 -8"/><path d="M-1 -14.6 L4.6 -9.4 L-1 -4.2 Z M1 14.6 L-4.6 9.4 L1 4.2 Z" fill="#475c66" stroke="none"/><path d="M-5.6 -8 A9.6 9.6 0 0 1 1 -9.5 M5.6 8 A9.6 9.6 0 0 1 -1 9.5"/></g></svg><svg class="abs" style="left:7.5px;top:251.60000000000002px" width="42" height="42" viewBox="-21.0 -21.0 42 42"><g fill="none" stroke="#475c66" stroke-width="2.6"><g transform="rotate(-45)"><rect x="-7.6" y="-12.4" width="15.2" height="24.8" rx="1.6" stroke-width="2.2"/></g><path d="M3 -16 A15.6 15.6 0 0 1 15.8 -2.6 M-3 16 A15.6 15.6 0 0 1 -15.8 2.6" stroke-width="2"/><path d="M2 -19.4 L8 -15.4 L2.4 -12 Z M-2 19.4 L-8 15.4 L-2.4 12 Z" fill="#475c66" stroke="none"/></g></svg><svg class="abs" style="left:13.5px;top:311.0px" width="30" height="40" viewBox="-15.0 -20.0 30 40"><g fill="none" stroke="#475c66" stroke-width="2.6"><rect x="-9.2" y="-15.6" width="18.4" height="31.2" rx="2.6" stroke-width="2.4"/><path d="M-5.4 9.6 L5.4 -9.6" stroke-width="1.7"/><path d="M6.4 -11.4 L5.6 -5.8 L2 -8.2 Z M-6.4 11.4 L-5.6 5.8 L-2 8.2 Z" fill="#475c66" stroke="none"/></g></svg><svg class="abs" style="left:12.5px;top:372.0px" width="32" height="32" viewBox="-16.0 -16.0 32 32"><g fill="none" stroke="#475c66" stroke-width="2.6"><path d="M-2.6 -11.2 H-9.6 Q-11.4 -11.2 -11.4 -9.4 V9.4 Q-11.4 11.2 -9.6 11.2 H9.4 Q11.2 11.2 11.2 9.4 V2.4 M2.4 -11.4 H11.4 V-2.4 M11 -11 L-4.6 4.6"/></g></svg><svg class="abs" style="left:12.5px;top:429.4px" width="32" height="32" viewBox="-16.0 -16.0 32 32"><g fill="none" stroke="#475c66" stroke-width="2.6"><rect x="-12.6" y="-12.6" width="9.6" height="9.6" fill="#475c66" stroke="none"/><rect x="-9.8" y="-9.8" width="4.0" height="4.0" fill="#fff" stroke="none"/><rect x="3" y="-12.6" width="9.6" height="9.6" fill="#475c66" stroke="none"/><rect x="5.8" y="-9.8" width="4.0" height="4.0" fill="#fff" stroke="none"/><rect x="-12.6" y="3" width="9.6" height="9.6" fill="#475c66" stroke="none"/><rect x="-9.8" y="5.8" width="4.0" height="4.0" fill="#fff" stroke="none"/><rect x="-1.4" y="-11" width="2.6" height="2.6" fill="#475c66" stroke="none"/><rect x="-1.4" y="-6.4" width="2.6" height="3.6" fill="#475c66" stroke="none"/><rect x="-12.6" y="-1.4" width="2.6" height="2.6" fill="#475c66" stroke="none"/><rect x="-1.4" y="-1.4" width="5.4" height="2.6" fill="#475c66" stroke="none"/><rect x="6.4" y="-1.4" width="2.6" height="2.6" fill="#475c66" stroke="none"/><rect x="10" y="-1.4" width="2.6" height="2.6" fill="#475c66" stroke="none"/><rect x="3.8" y="1.6" width="2.6" height="5" fill="#475c66" stroke="none"/><rect x="8.2" y="2" width="2.6" height="2.6" fill="#475c66" stroke="none"/><rect x="-1.4" y="3.8" width="2.6" height="2.6" fill="#475c66" stroke="none"/><rect x="10" y="4.6" width="2.6" height="2.6" fill="#475c66" stroke="none"/><rect x="-1.4" y="8" width="5.4" height="2.6" fill="#475c66" stroke="none"/><rect x="6.4" y="6.4" width="2.6" height="2.6" fill="#475c66" stroke="none"/><rect x="3.8" y="10" width="2.6" height="2.6" fill="#475c66" stroke="none"/><rect x="8.4" y="10" width="4.2" height="2.6" fill="#475c66" stroke="none"/></g></svg><svg class="abs" style="left:12.5px;top:486.0px" width="32" height="32" viewBox="-16.0 -16.0 32 32"><g fill="none" stroke="#475c66" stroke-width="2.6"><path d="M0 -12.6 V0.6" stroke-width="2.8"/><path d="M-7.2 -8.2 A11.2 11.2 0 1 0 7.2 -8.2"/></g></svg></div>
<div id="ribbon"><div>Sandbox Mode</div></div>
<div id="hsplit"></div>
<div id="bp">
<div id="otab"></div>
<div class="hline" style="left:168px;top:60px;width:2153px"></div>
<div class="bt" style="left:42.0px;letter-spacing:-0.09px">Outputs</div>
<div class="bt" style="left:209.0px;letter-spacing:-0.23px">Analyzer</div>
<div class="bt" style="left:384.0px;letter-spacing:-0.10px">Pub Commands</div>
<div class="bt" style="left:638.3px;letter-spacing:0.55px">Tests</div>
<div class="bt" style="left:778.7px;letter-spacing:0.67px">Tools</div>
<div class="bt" style="left:920.0px;letter-spacing:-1.51px">Run</div>
<div class="bt" style="left:1043.0px;letter-spacing:0.18px">Git History</div>
<svg class="abs" style="left:2283.6px;top:14px" width="16" height="32" viewBox="-8 -16 16 32"><circle cy="-6.8" r="2.4" fill="#fff"/><circle cy="0" r="2.4" fill="#fff"/><circle cy="6.8" r="2.4" fill="#fff"/></svg>
<svg class="abs" style="left:18px;top:84px" width="24" height="20" viewBox="0 0 24 20"><path d="M1.4 3.2 H20.4 M1.4 9 H20.4 M1.4 14.6 H12.6" stroke="#d0d0d0" stroke-width="1.7"/></svg>
<svg class="abs" style="left:49px;top:82px" width="25" height="17" viewBox="0 2 26 19" preserveAspectRatio="none" aria-label="pointing right"><path d="M1 8.4 Q1 6.6 3 6.6 H10 Q9 3.6 12.6 3.4 Q15 5.2 16.4 7.4 L24 7.6 Q25.6 7.8 25.6 9.2 Q25.6 10.6 24 10.8 L16.8 11 Q18.4 11.6 17.8 13.2 Q18.6 14.4 17.2 15.6 Q17.6 17.2 15.8 17.8 Q15.4 19.2 13.6 19.2 H7 Q3.6 19.2 2 16.4 Q1 14.4 1 12 Z" fill="#f6b93b"/><path d="M12 11 H17 M12 13.6 H17.8 M12 16 H17" stroke="#c8871c" stroke-width="0.9" fill="none"/></svg>
<div id="outl">Project "Habit Tracker" was successfully loaded.</div>
<div class="ab3" style="left:1423px;width:242px"><svg class="abs" style="left:24px;top:16px" width="34" height="34" viewBox="0 0 34 34"><g fill="none" stroke="#fff" stroke-width="2.2" stroke-linecap="round"><path d="M11 13.4 C11.4 9.2 14.2 7.4 17 7.4 C19.2 7.4 21 8.4 22 10.2"/><path d="M24.4 15 C25 19 24.6 26.6 17 26.6 C13.6 26.6 11.4 24.8 10.6 22"/><path d="M13 8.4 L10.6 5.6 M21 8.4 L23.4 5.6 M10.4 14.2 L5.6 12.4 M10 18.6 H5 M25.4 19 H30 M24.6 23.4 L29 25.4 M9.4 23 L6 24.8"/><path d="M2.6 31 L31.4 3" stroke-width="2.6"/></g><circle cx="17" cy="22" r="1.4" fill="#fff"/></svg><span style="left:72px">Fix my Error</span></div>
<div class="ab3" style="left:1685px;width:236px"><svg class="abs" style="left:26px;top:17px" width="32" height="32" viewBox="-16 -16 32 32"><g fill="none" stroke="#fff" stroke-width="2.3" stroke-linecap="round" stroke-linejoin="round"><path d="M-1.6 -11 C-2.4 -14 -7.4 -14.2 -8.4 -10.6 C-12.4 -10.4 -13.6 -5.6 -11.4 -3.4 C-14.6 -1 -14 3.6 -11 5 C-11.8 9 -8 11.6 -5.2 10.2 C-4.2 13 -1.6 12.4 -1.6 10 Z"/><path d="M1.6 -11 C2.4 -14 7.4 -14.2 8.4 -10.6 C12.4 -10.4 13.6 -5.6 11.4 -3.4 C14.6 -1 14 3.6 11 5 C11.8 9 8 11.6 5.2 10.2 C4.2 13 1.6 12.4 1.6 10 Z"/><path d="M-1.6 -3 C-4 -3 -5.4 -4.4 -5.4 -6.4 M1.6 -3 C4 -3 5.4 -4.4 5.4 -6.4 M-1.6 4 C-4.4 4 -6 2.6 -6.4 0.6 M1.6 4 C4.4 4 6 2.6 6.4 0.6"/></g></svg><span style="left:72px">AI Assistant</span></div>
<div class="ab3" style="left:1942px;width:276px"><svg class="abs" style="left:25px;top:16px" width="27" height="33" viewBox="0 0 27 33"><path d="M17.4 0.6 H26 L8.2 18.4 L3.8 14.2 Z" fill="#c3c7cf"/><path d="M17.4 15.4 H26 L17.4 24 L26 32.4 H17.4 L8.8 24 Z" fill="#c3c7cf"/><path d="M8.8 24 L13.1 19.7 L17.4 24 L13.1 28.3 Z" fill="#f1f2f4"/></svg><span style="left:72px">Documentation</span></div>
<div class="abs" style="left:2239px;top:255px;width:68px;height:68px;border-radius:13px;background:#4aa3e2;box-shadow:0 3px 8px rgba(0,0,0,0.35)"><svg class="abs" style="left:19px;top:19px" width="31" height="30" viewBox="0 0 31 30"><path d="M3.6 1 H27 Q29.6 1 29.6 3.6 V21.6 Q29.6 24.2 27 24.2 H6.4 L1 29.4 V3.6 Q1 1 3.6 1 Z" fill="#fff"/><path d="M6.6 7.8 H24 M6.6 12.4 H24 M6.6 17 H18" stroke="#4aa3e2" stroke-width="2.4"/></svg></div>
</div>
<div id="status">
<svg class="abs" style="left:28px;top:4px" width="28" height="32" viewBox="28 1363 28 32"><g fill="none" stroke="#e3e3e3" stroke-width="2.4"><circle cx="35.6" cy="1370" r="3"/><circle cx="47.4" cy="1373" r="3"/><circle cx="35.6" cy="1386" r="3"/><path d="M35.6 1373 V1383 M47.4 1376 C47.4 1381.6 35.6 1378.6 35.6 1383.6"/></g></svg>
<span class="abs" style="left:69px;top:0;font-size:22.5px;letter-spacing:-0.53px;white-space:nowrap;">No branch</span>
<svg class="abs" style="left:176px;top:12px" width="20" height="14" viewBox="0 0 20 14"><path d="M3 2.6 L9.8 9.6 L16.6 2.6" fill="none" stroke="#e3e3e3" stroke-width="2.6"/></svg>
<span class="abs" style="left:242px;top:0;font-size:22.5px;letter-spacing:-0.66px;white-space:nowrap;">Analyzer Ready</span>
<div class="chip" style="left:1302px;width:222px"></div>
<span class="abs" style="left:1316px;top:0;font-size:22.8px;letter-spacing:0.52px;white-space:nowrap;-webkit-text-stroke:0.55px #e3e3e3;">Discover Premium</span>
<div class="chip" style="left:2299px;width:204px"></div>
<span class="abs" style="left:2349.5px;top:0;font-size:22.5px;letter-spacing:0.93px;white-space:nowrap;-webkit-text-stroke:0.55px #e3e3e3;">Shortcuts</span>
<div class="chip" style="left:2510px;width:204px"></div>
<span class="abs" style="left:2539.6px;top:0;font-size:22.5px;letter-spacing:0.60px;white-space:nowrap;-webkit-text-stroke:0.55px #e3e3e3;">Flutter 3.29</span>
<svg class="abs" style="left:2666px;top:12px" width="20" height="14" viewBox="0 0 20 14"><path d="M3.4 3 L10.2 9.8 L17 3" fill="none" stroke="#e3e3e3" stroke-width="2.6"/></svg>
<div class="chip" style="left:2721px;width:57px"></div>
<svg class="abs" style="left:2736px;top:5px" width="28" height="28" viewBox="-14 -14 28 28"><circle r="10.6" fill="none" stroke="#e3e3e3" stroke-width="1.8"/><text x="0" y="5.6" text-anchor="middle" font-family="Liberation Sans, sans-serif" font-weight="bold" font-size="15.5" fill="#e3e3e3">?</text></svg>
<div class="chip" style="left:2785px;width:50px"></div>
<div class="abs" style="left:2794px;top:11px;width:17px;height:17px;border-radius:50%;background:#8ed67f"></div>
</div>
</body>
</html>
